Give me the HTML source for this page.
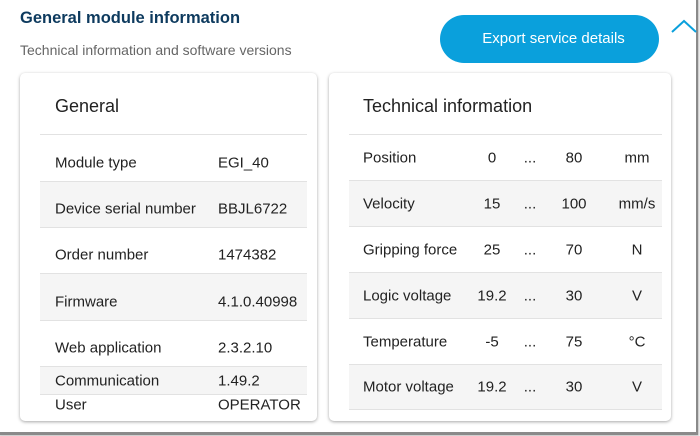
<!DOCTYPE html>
<html><head><style>
*{margin:0;padding:0;box-sizing:border-box}
body{width:700px;height:436px;background:#fff;font-family:"Liberation Sans",sans-serif;position:relative;overflow:hidden;color:#222}
.frame{position:absolute;left:-2px;top:-2px;width:700px;height:437px;border-right:2px solid #8a8a8a;border-bottom:3px solid #8a8a8a;box-shadow:1px 1px 2px #bbb}
.t{position:absolute;white-space:nowrap}
.card{position:absolute;top:73px;height:348px;background:#fff;border-radius:5px;box-shadow:0 1px 3px rgba(0,0,0,.35)}
.row{position:absolute;border-top:1px solid #e2e2e2}
.g{background:#f5f5f5}
.row span{position:absolute;font-size:15px;white-space:nowrap;transform:translateY(-50%);top:50%}
.L span{top:61%}
.c{text-align:center;width:40px;margin-left:-20px}
</style></head><body>
<div class="frame"></div>
<div class="t" style="left:20px;top:9px;font-size:16.5px;font-weight:bold;color:#0d3a5e">General module information</div>
<div class="t" style="left:20px;top:42px;font-size:14px;color:#666">Technical information and software versions</div>
<div style="position:absolute;left:440px;top:15px;width:219px;height:48px;border-radius:24px;background:#0aa0dc;color:#fff;font-size:15px;line-height:48px;text-align:center;padding-left:8px">Export service details</div>
<svg style="position:absolute;left:670px;top:17px" width="28" height="18"><path d="M2 15 L14 4 L26 15" fill="none" stroke="#0aa0dc" stroke-width="2"/></svg>

<div class="card" style="left:20px;width:297px">
<div class="t" style="left:35px;top:23px;font-size:18px">General</div>
<div class="row L" style="left:20px;width:267px;top:61px;height:47px"><span style="left:15px">Module type</span><span style="left:178px">EGI_40</span></div>
<div class="row g L" style="left:20px;width:267px;top:108px;height:46px"><span style="left:15px">Device serial number</span><span style="left:178px">BBJL6722</span></div>
<div class="row L" style="left:20px;width:267px;top:154px;height:46px"><span style="left:15px">Order number</span><span style="left:178px">1474382</span></div>
<div class="row g L" style="left:20px;width:267px;top:200px;height:47px"><span style="left:15px">Firmware</span><span style="left:178px">4.1.0.40998</span></div>
<div class="row" style="left:20px;width:267px;top:247px;height:46px;"><span style="left:15px;top:60%">Web application</span><span style="left:178px;top:60%">2.3.2.10</span></div>
<div class="row g" style="left:20px;width:267px;top:293px;height:28px"><span style="left:15px">Communication</span><span style="left:178px">1.49.2</span></div>
<div class="row" style="left:20px;width:267px;top:321px;height:20px"><span style="left:15px">User</span><span style="left:178px">OPERATOR</span></div>
</div>

<div class="card" style="left:329px;width:342px">
<div class="t" style="left:34px;top:23px;font-size:18px">Technical information</div>
<div class="row" style="left:20px;width:313px;top:61px;height:46px"><span style="left:14px">Position</span><span class="c" style="left:143px">0</span><span class="c" style="left:181px">...</span><span class="c" style="left:225px">80</span><span class="c" style="left:288px">mm</span></div>
<div class="row g" style="left:20px;width:313px;top:107px;height:46px"><span style="left:14px">Velocity</span><span class="c" style="left:143px">15</span><span class="c" style="left:181px">...</span><span class="c" style="left:225px">100</span><span class="c" style="left:288px">mm/s</span></div>
<div class="row" style="left:20px;width:313px;top:153px;height:46px"><span style="left:14px">Gripping force</span><span class="c" style="left:143px">25</span><span class="c" style="left:181px">...</span><span class="c" style="left:225px">70</span><span class="c" style="left:288px">N</span></div>
<div class="row g" style="left:20px;width:313px;top:199px;height:46px"><span style="left:14px">Logic voltage</span><span class="c" style="left:143px">19.2</span><span class="c" style="left:181px">...</span><span class="c" style="left:225px">30</span><span class="c" style="left:288px">V</span></div>
<div class="row" style="left:20px;width:313px;top:245px;height:46px"><span style="left:14px">Temperature</span><span class="c" style="left:143px">-5</span><span class="c" style="left:181px">...</span><span class="c" style="left:225px">75</span><span class="c" style="left:288px">°C</span></div>
<div class="row g" style="left:20px;width:313px;top:291px;height:46px;border-bottom:1px solid #e2e2e2"><span style="left:14px">Motor voltage</span><span class="c" style="left:143px">19.2</span><span class="c" style="left:181px">...</span><span class="c" style="left:225px">30</span><span class="c" style="left:288px">V</span></div>
</div>
</body></html>
